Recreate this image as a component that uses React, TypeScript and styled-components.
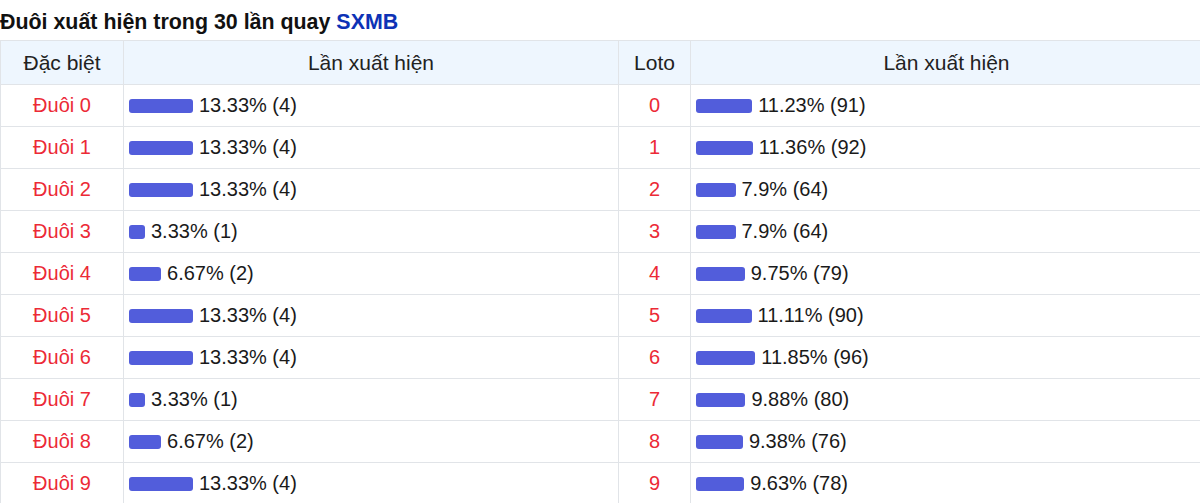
import React from "react";
import styled, { createGlobalStyle } from "styled-components";

const GlobalStyle = createGlobalStyle`
  body {
    margin: 0;
    background: #fff;
    font-family: "Liberation Sans", Arial, sans-serif;
    color: #111;
  }
`;

const Wrapper = styled.div`
  width: 1200px;
`;

const Title = styled.h3`
  margin: 0;
  padding: 10px 0 6px;
  font-size: 21.4px;
  line-height: 24px;
  font-weight: bold;
  color: #111;

  span {
    color: #0d32b6;
  }
`;

const Table = styled.table`
  width: 1198px;
  border-collapse: collapse;
  table-layout: fixed;
`;

const HeadCell = styled.th<{ w: number }>`
  width: ${(p) => p.w}px;
  height: 43px;
  background: #eef6fe;
  border: 1.5px solid #e1e4e8;
  font-size: 21px;
  font-weight: normal;
  color: #222;
  text-align: center;
  padding: 0;
`;

const NameCell = styled.td`
  height: 41px;
  border: 1.5px solid #e1e4e8;
  text-align: center;
  color: #ec2a36;
  font-size: 20px;
  padding: 0;
`;

const BarCell = styled.td`
  height: 41px;
  border: 1.5px solid #e1e4e8;
  padding: 0 5px;
  font-size: 20px;
  color: #1a1a1a;
`;

const BarRow = styled.div`
  display: flex;
  align-items: center;
  gap: 6px;
`;

const Bar = styled.div`
  height: 14px;
  border-radius: 3px;
  background: #525ddb;
  flex-shrink: 0;
`;

const special = [
  [13.33, 4], [13.33, 4], [13.33, 4], [3.33, 1], [6.67, 2],
  [13.33, 4], [13.33, 4], [3.33, 1], [6.67, 2], [13.33, 4],
];

const loto = [
  [11.23, 91], [11.36, 92], [7.9, 64], [7.9, 64], [9.75, 79],
  [11.11, 90], [11.85, 96], [9.88, 80], [9.38, 76], [9.63, 78],
];

const App = () => {
  return (
    <Wrapper>
      <GlobalStyle />
      <Title>
        Đuôi xuất hiện trong 30 lần quay <span>SXMB</span>
      </Title>
      <Table>
        <thead>
          <tr>
            <HeadCell w={122}>Đặc biệt</HeadCell>
            <HeadCell w={494}>Lần xuất hiện</HeadCell>
            <HeadCell w={71}>Loto</HeadCell>
            <HeadCell w={511}>Lần xuất hiện</HeadCell>
          </tr>
        </thead>
        <tbody>
          {special.map(([pct, count], i) => (
            <tr key={i}>
              <NameCell>Đuôi {i}</NameCell>
              <BarCell>
                <BarRow>
                  <Bar style={{ width: pct * 4.8 }} />
                  {pct}% ({count})
                </BarRow>
              </BarCell>
              <NameCell>{i}</NameCell>
              <BarCell>
                <BarRow>
                  <Bar style={{ width: loto[i][0] * 5 }} />
                  {loto[i][0]}% ({loto[i][1]})
                </BarRow>
              </BarCell>
            </tr>
          ))}
        </tbody>
      </Table>
    </Wrapper>
  );
};

export default App;
